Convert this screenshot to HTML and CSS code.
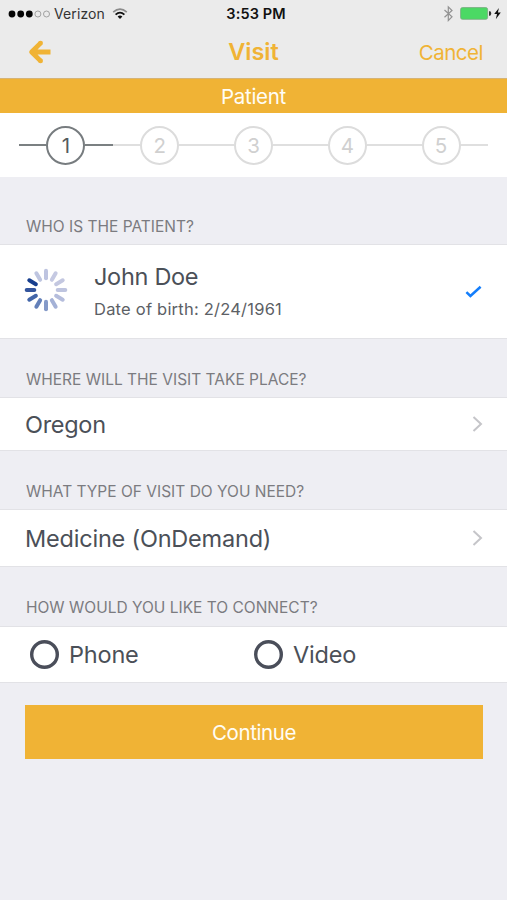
FILE: index.html
```html
<!DOCTYPE html>
<html lang="en">
<head>
<meta charset="utf-8">
<title>Visit</title>
<link rel="stylesheet" href="styles.css">
</head>
<body>
<header class="top">
  <div class="status">
    <div class="carrier">
      <svg width="42" height="10" viewBox="0 0 42 10"><g fill="#050505"><circle cx="4" cy="5" r="3.4"/><circle cx="12.7" cy="5" r="3.4"/><circle cx="21.3" cy="5" r="3.4"/></g><g fill="none" stroke="#999" stroke-width=".9"><circle cx="29.9" cy="5" r="3"/><circle cx="38.5" cy="5" r="3"/></g></svg>
      <span class="carrier-name">Verizon</span>
      <svg class="wifi" width="16" height="12" viewBox="0 0 16 12"><path d="M1.2 4.1Q8-1.9 14.8 4.1" fill="none" stroke="#8b8b8b" stroke-width="1.7"/><path d="M3.6 6.6Q8 2.6 12.4 6.6" fill="none" stroke="#111" stroke-width="1.8"/><path d="M5.6 8.6Q8 6.5 10.4 8.6L8 11Z" fill="#111"/></svg>
    </div>
    <span class="clock">3:53 PM</span>
    <div class="power">
      <svg width="60" height="18" viewBox="0 0 60 18"><path d="M1.5 5 9 11.8 5.3 15.5V1.9L9 5.5 1.5 12.2" fill="none" stroke="#929292" stroke-width="1.2"/><rect x="17.6" y="2.6" width="27" height="11.7" rx="1.8" fill="#4bd964" stroke="#76a77e" stroke-width=".8"/><path d="M46 6.3h1.2q1 .6 1 2.2t-1 2.2H46Z" fill="#333"/><path d="M55.9 3 51.2 9h2.8l-1.2 5.2 5-6.6h-2.9Z" fill="#111"/></svg>
    </div>
  </div>
  <nav class="nav">
    <svg class="back" width="24" height="24" viewBox="0 0 24 24"><path d="M12.8 2.9 3.6 12l9.2 9.1M4 12h18.5" fill="none" stroke="#f0b335" stroke-width="4.8" stroke-linejoin="round"/><circle cx="12.6" cy="3.1" r="2.4" fill="#f0b335"/><circle cx="12.6" cy="20.9" r="2.4" fill="#f0b335"/></svg>
    <h1 class="title">Visit</h1>
    <a class="cancel">Cancel</a>
  </nav>
</header>
<div class="banner"><span>Patient</span></div>
<ol class="steps">
  <li class="step active"><span class="num">1</span></li>
  <li class="step"><span class="num">2</span></li>
  <li class="step"><span class="num">3</span></li>
  <li class="step"><span class="num">4</span></li>
  <li class="step"><span class="num">5</span></li>
</ol>
<main>
  <h2 class="label who"><span>WHO IS THE PATIENT?</span></h2>
  <div class="row patient">
    <svg class="spinner" width="44" height="44" viewBox="-22 -22 44 44"><g stroke-width="4" stroke-linecap="round"><path d="M0-11.7V-19.3" stroke="#bec4e0"/><path d="M0-11.7V-19.3" stroke="#c5c9e2" transform="rotate(30)"/><path d="M0-11.7V-19.3" stroke="#c3c7e0" transform="rotate(60)"/><path d="M0-11.7V-19.3" stroke="#bec4df" transform="rotate(90)"/><path d="M0-11.7V-19.3" stroke="#b5bddc" transform="rotate(120)"/><path d="M0-11.7V-19.3" stroke="#a4b1d6" transform="rotate(150)"/><path d="M0-11.7V-19.3" stroke="#859ac8" transform="rotate(180)"/><path d="M0-11.7V-19.3" stroke="#6480b9" transform="rotate(210)"/><path d="M0-11.7V-19.3" stroke="#4366a9" transform="rotate(240)"/><path d="M0-11.7V-19.3" stroke="#34559d" transform="rotate(270)"/><path d="M0-11.7V-19.3" stroke="#173e8e" transform="rotate(300)"/><path d="M0-11.7V-19.3" stroke="#bec5e0" transform="rotate(330)"/></g></svg>
    <div class="person">
      <span class="name">John Doe</span>
      <span class="dob">Date of birth: 2/24/1961</span>
    </div>
    <svg class="check" width="18" height="14" viewBox="0 0 18 14"><path d="M1.4 7.2 5.4 11 15.6 1.8" fill="none" stroke="#147efb" stroke-width="2.5"/></svg>
  </div>
  <h2 class="label where"><span>WHERE WILL THE VISIT TAKE PLACE?</span></h2>
  <div class="row place">
    <span class="value oregon">Oregon</span>
    <svg class="chevron" width="11" height="18" viewBox="0 0 11 18"><path d="M1.5 2 9 9 1.5 16" fill="none" stroke="#c5c5c9" stroke-width="2"/></svg>
  </div>
  <h2 class="label what"><span>WHAT TYPE OF VISIT DO YOU NEED?</span></h2>
  <div class="row type">
    <span class="value medicine">Medicine (OnDemand)</span>
    <svg class="chevron" width="11" height="18" viewBox="0 0 11 18"><path d="M1.5 2 9 9 1.5 16" fill="none" stroke="#c5c5c9" stroke-width="2"/></svg>
  </div>
  <h2 class="label how"><span>HOW WOULD YOU LIKE TO CONNECT?</span></h2>
  <div class="row connect">
    <div class="option"><svg class="radio" width="29" height="29" viewBox="0 0 29 29"><circle cx="14.5" cy="14.5" r="12.8" fill="none" stroke="#4a4e5a" stroke-width="3.4"/></svg><span class="value phone">Phone</span></div>
    <div class="option"><svg class="radio" width="29" height="29" viewBox="0 0 29 29"><circle cx="14.5" cy="14.5" r="12.8" fill="none" stroke="#4a4e5a" stroke-width="3.4"/></svg><span class="value video">Video</span></div>
  </div>
  <button class="continue"><span>Continue</span></button>
</main>
</body>
</html>
```
FILE: styles.css
```css
* { box-sizing: border-box; }
body {
  margin: 0;
  min-height: 900px;
  background: #eeeef3;
  color: #4b5058;
  font-family: Inter, "Liberation Sans", sans-serif;
  white-space: nowrap;
}
svg { display: block; flex: none; }
h1, h2, ol { margin: 0; padding: 0; font-weight: 400; }

.top { height: 79px; background: #ebebeb; border-bottom: 1px solid #d6b476; }
.status { display: grid; grid-template-columns: 1fr auto 1fr; height: 27px; align-items: center; color: #111; }
.carrier { display: flex; align-items: center; padding-left: 8px; }
.carrier-name { font-size: 14px; letter-spacing: .1px; margin-left: 4px; color: #333; }
.wifi { margin-left: 7px; }
.clock { font-size: 14.5px; font-weight: 600; letter-spacing: .1px; margin-left: 5px; }
.power { display: flex; justify-content: flex-end; padding-right: 4px; }
.nav { display: grid; grid-template-columns: 1fr auto 1fr; height: 49px; align-items: center; color: #f0b335; }
.back { margin-left: 28px; }
.title { font-size: 23.5px; font-weight: 600; }
.cancel { justify-self: end; margin: 2px 24px 0 0; font-size: 20.5px; letter-spacing: -.5px; }

.banner { height: 34px; display: flex; align-items: center; justify-content: center; background: #f0b335; color: #fffdf5; font-size: 20.5px; letter-spacing: -.3px; }

.steps { display: flex; height: 64px; padding: 0 19px; background: #fff; list-style: none; }
.step { flex: 1; display: flex; align-items: center; color: #d0d0d0; }
.step::before, .step::after { content: ""; flex: 1; height: 2px; background: #dfdfdf; }
.num { width: 39px; height: 39px; border: 2px solid #dcdcdc; border-radius: 50%; display: flex; align-items: center; justify-content: center; font-size: 20.5px; }
.active { color: #555b5e; }
.active .num { border-color: #777c7f; }
.active::before, .active::after { background: #7b8082; }

.label { display: flex; align-items: flex-end; padding-left: 26px; font-size: 15.5px; line-height: 20px; color: #7b7b80; }
.who { height: 67px; padding-bottom: 7px; }
.where { height: 58px; padding-bottom: 7px; }
.what { height: 58px; padding-bottom: 7px; }
.how { height: 59px; padding-bottom: 8px; }

.row { display: flex; align-items: center; background: #fff; border: solid #e2e2e6; border-width: 1px 0; padding: 0 24px 0 25px; }
.patient { height: 95px; padding-left: 24px; }
.spinner { margin-bottom: 4px; }
.place { height: 54px; justify-content: space-between; }
.type { height: 58px; justify-content: space-between; }
.connect { height: 57px; padding: 0 0 0 30px; }

.person { display: flex; flex-direction: column; flex: 1; margin-left: 26px; padding-top: 3px; }
.name { font-size: 23.5px; line-height: 32px; letter-spacing: -.3px; }
.dob { font-size: 16.5px; line-height: 32px; letter-spacing: .22px; color: #5c6065; }
.value { font-size: 23.5px; letter-spacing: -.2px; }
.oregon { letter-spacing: -.3px; }
.option { display: flex; align-items: center; width: 224px; }
.option .value { margin-left: 10px; }

.continue { display: flex; align-items: center; justify-content: center; width: 458px; height: 54px; margin: 22px 0 0 25px; padding: 0; border: 0; background: #f0b335; color: #fffdf5; font: 20.5px Inter, "Liberation Sans", sans-serif; letter-spacing: -.4px; }
```
